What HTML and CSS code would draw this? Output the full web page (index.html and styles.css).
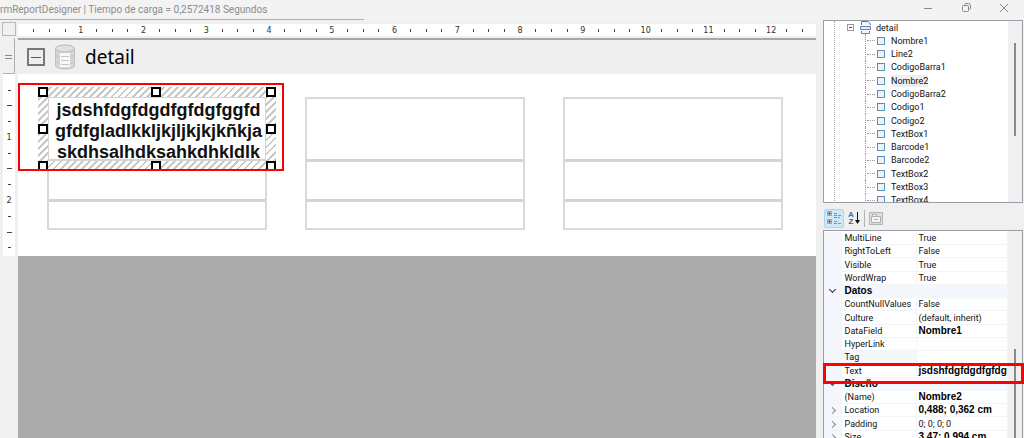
FILE: index.html
```
<!DOCTYPE html>
<html lang="es">
<head>
  <meta charset="UTF-8">
  <meta name="viewport" content="width=device-width, initial-scale=1.0">
  <title>FormReportDesigner</title>
  <link rel="stylesheet" href="styles.css">
</head>
<body>
  <div class="window">
    <header class="titlebar">
      <div class="caption">rmReportDesigner | Tiempo de carga = 0,2572418 Segundos</div>
      <div class="win-buttons">
        <button type="button" aria-label="Minimizar"><svg width="10" height="10" viewBox="0 0 10 10"><path d="M1 5.5h8"/></svg></button>
        <button type="button" aria-label="Restaurar"><svg width="10" height="10" viewBox="0 0 10 10"><path d="M1.500 3.500q0-1 1-1h4q1 0 1 1v4q0 1-1 1h-4q-1 0-1-1zM3.500 1.500q.3-1 1.500-1h2.500q2 0 2 2v2.500q0 1-1 1.500"/></svg></button>
        <button type="button" aria-label="Cerrar"><svg width="10" height="10" viewBox="0 0 10 10"><path d="M1 1l8 8M9 1l-8 8"/></svg></button>
      </div>
    </header>

    <main class="designer">
      <div class="corner"></div>
      <div class="ruler-x">
        <i></i><i></i><i></i><b>1</b>
        <i></i><i></i><i></i><b>2</b>
        <i></i><i></i><i></i><b>3</b>
        <i></i><i></i><i></i><b>4</b>
        <i></i><i></i><i></i><b>5</b>
        <i></i><i></i><i></i><b>6</b>
        <i></i><i></i><i></i><b>7</b>
        <i></i><i></i><i></i><b>8</b>
        <i></i><i></i><i></i><b>9</b>
        <i></i><i></i><i></i><b>10</b>
        <i></i><i></i><i></i><b>11</b>
        <i></i><i></i><i></i><b>12</b>
        <i></i><i></i>
      </div>

      <div class="band-grip"></div>
      <div class="band-head">
        <button type="button" class="collapse" aria-label="Contraer"></button>
        <svg class="band-icon" width="22" height="26" viewBox="0 0 22 26">
          <path class="db-side" d="M1.500 4.500v17c0 2 4 3.500 9.500 3.500s9.500-1.500 9.500-3.500v-17z"/>
          <ellipse class="db-top" cx="11" cy="4.500" rx="9.500" ry="3.500"/>
          <path class="db-page" d="M6 9h10v14H6z"/>
          <path class="db-line" d="M1.500 10c0 2 2 3 4.500 3.300M20.500 10c0 2-2 3-4.500 3.300M1.500 16c0 2 2 3 4.500 3.300M20.500 16c0 2-2 3-4.500 3.300M7 12.500h8M7 16.500h8M7 20.500h8"/>
        </svg>
        <span>detail</span>
      </div>

      <div class="ruler-y">
        <i></i><i class="half"></i><i></i><b>1</b>
        <i></i><i class="half"></i><i></i><b>2</b>
        <i></i><i class="half"></i><i></i>
      </div>
      <div class="band-body">
        <div class="label"><div></div><div></div><div></div></div>
        <div class="label"><div></div><div></div><div></div></div>
        <div class="label"><div></div><div></div><div></div></div>
        <div class="callout">
          <div class="selection">
            <div class="field">jsdshfdgfdgdfgfdgfggfd<br>gfdfgladlkkljkjljkjkjkñkja<br>skdhsalhdksahkdhkldlk</div>
            <span class="handle t l"></span><span class="handle t c"></span><span class="handle t r"></span>
            <span class="handle m l"></span><span class="handle m r"></span>
            <span class="handle b l"></span><span class="handle b c"></span><span class="handle b r"></span>
          </div>
        </div>
      </div>

      <div class="blank"></div>
    </main>

    <aside class="side">
      <div class="pane tree">
        <ul>
          <li class="parent">
            <span class="toggle"></span>
            <svg width="11" height="13" viewBox="0 0 11 13"><path fill="#eef3f8" stroke="#5c6fbe" d="M1.500 4V.5H8L10.500 3v1"/><path fill="#e3eef5" stroke="#5c7fbe" d="M.5 5.500h10v3H.5z"/><path fill="#eef3f8" stroke="#3a9db0" d="M1.500 10v2.500h8V10"/></svg>
            <span>detail</span>
          </li>
          <li>Nombre1</li>
          <li>Line2</li>
          <li>CodigoBarra1</li>
          <li><span class="current">Nombre2</span></li>
          <li>CodigoBarra2</li>
          <li>Codigo1</li>
          <li>Codigo2</li>
          <li>TextBox1</li>
          <li>Barcode1</li>
          <li>Barcode2</li>
          <li>TextBox2</li>
          <li>TextBox3</li>
          <li>TextBox4</li>
        </ul>
        <div class="scroll"></div>
      </div>

      <div class="toolbar">
        <button type="button" class="active" aria-label="Por categorías">
          <svg width="16" height="14" viewBox="0 0 16 14"><path fill="#fff" stroke="#8aa4b4" d="M1.500.5h4v4h-4zM1.500 8.500h4v4h-4z"/><path fill="#222" d="M2.500 1.500h2v2h-2zM2.500 9.500h2v2h-2z"/><path stroke="#7794a5" stroke-dasharray="3 1" d="M8 2.500h3M8 4.500h7M8 6.500h6M8 10.500h3M8 12.500h7"/></svg>
        </button>
        <button type="button" class="sort" aria-label="Alfabético">
          <span class="az"><b>A</b><b>Z</b></span>
          <svg width="5" height="12" viewBox="0 0 5 12"><path fill="none" stroke="#111" d="M2.500 0v10"/><path fill="#111" d="M0 8h5l-2.500 4z"/></svg>
        </button>
        <hr>
        <button type="button" disabled aria-label="Páginas de propiedades">
          <svg width="14" height="13" viewBox="0 0 14 13"><path fill="#ddd" stroke="#b5b5b5" d="M.5.5h13v12H.5z"/><path fill="#f4f4f4" stroke="#b0b0b0" d="M2.500 4.500h9v6h-9zM3.500 4V2.500h4V4"/><path stroke="#b0b0b0" d="M5 7.500h4"/></svg>
        </button>
      </div>

      <div class="pane props">
        <table>
          <tr><td></td><th>MultiLine</th><td>True</td></tr>
          <tr><td></td><th>RightToLeft</th><td>False</td></tr>
          <tr><td></td><th>Visible</th><td>True</td></tr>
          <tr><td></td><th>WordWrap</th><td>True</td></tr>
          <tr class="category"><td><span class="open"></span></td><th colspan="2">Datos</th></tr>
          <tr><td></td><th>CountNullValues</th><td>False</td></tr>
          <tr><td></td><th>Culture</th><td>(default, inherit)</td></tr>
          <tr><td></td><th>DataField</th><td><b>Nombre1</b></td></tr>
          <tr><td></td><th>HyperLink</th><td></td></tr>
          <tr class="picked"><td></td><th>Tag</th><td></td></tr>
          <tr><td></td><th>Text</th><td><b>jsdshfdgfdgdfgfdgfggfd</b></td></tr>
          <tr class="category"><td><span class="open"></span></td><th colspan="2">Diseño</th></tr>
          <tr><td></td><th>(Name)</th><td><b>Nombre2</b></td></tr>
          <tr><td><span class="closed"></span></td><th>Location</th><td><b>0,488; 0,362 cm</b></td></tr>
          <tr><td><span class="closed"></span></td><th>Padding</th><td>0; 0; 0; 0</td></tr>
          <tr><td><span class="closed"></span></td><th>Size</th><td><b>3,47; 0,994 cm</b></td></tr>
        </table>
        <div class="scroll"></div>
        <div class="mark"></div>
      </div>
    </aside>
  </div>
</body>
</html>
```
FILE: styles.css
```
* {
  margin: 0;
  padding: 0;
  box-sizing: border-box;
}
body {
  background: #f0f0f0;
  color: #111;
  font-family: Roboto, "Liberation Sans", sans-serif;
  font-size: 9px;
}
button {
  border: 0;
  background: none;
}
i {
  font-style: normal;
}
.window {
  display: grid;
  grid-template-columns: 1fr 208px;
  grid-template-rows: 20px 1fr;
  height: 100vh;
  overflow: hidden;
}

/* title bar */
.titlebar {
  grid-column: 1 / 3;
  display: flex;
  justify-content: space-between;
  background: #f3f3f3;
}
.caption {
  flex: 0 0 364px;
  border-bottom: 1px solid #b0b0b0;
  color: #8c8c8c;
  font-size: 10px;
  line-height: 20px;
  white-space: nowrap;
}
.win-buttons {
  display: flex;
  align-items: flex-start;
  padding: 3px 1px 0 0;
}
.win-buttons button {
  width: 38px;
  height: 10px;
}
.win-buttons svg {
  display: block;
  margin: 0 auto;
  fill: none;
  stroke: #888;
}

/* designer surface */
.designer {
  display: grid;
  grid-template-columns: 18px 1fr;
  grid-template-rows: 18px 36px 182px 1fr;
}
.corner {
  margin: 2px;
  border: 1px solid #b8b8b8;
}
.ruler-x {
  display: flex;
  align-items: center;
  margin: 4px 0 2px;
  padding: 0 6px 0 8px;
  background: #fff;
}
.ruler-x i, .ruler-x b {
  flex: 1 1 0;
  min-width: 0;
  display: flex;
  justify-content: center;
}
.ruler-x b, .ruler-y b {
  color: #333;
  font-family: "DejaVu Sans", sans-serif;
  font-size: 8px;
  font-weight: normal;
  line-height: 10px;
}
.ruler-x b {
  padding-top: 1px;
}
.ruler-x i::before {
  content: "";
  width: 1px;
  height: 3px;
  background: #444;
}
.band-grip {
  margin: 0 3px 0 3px;
  border: 1px solid #b0b0b0;
  border-width: 0 1px 1px 0;
  background: linear-gradient(#888, #888) center 17px / 7px 1px no-repeat,
              linear-gradient(#888, #888) center 20px / 7px 1px no-repeat, #f0f0f0;
}
.band-head {
  display: flex;
  align-items: center;
  border-top: 2px solid #a6a6a6;
  padding-left: 9px;
  background: #efefef;
  color: #000;
  font-family: "Noto Sans", "Open Sans", sans-serif;
  font-size: 19px;
  line-height: 34px;
}
.collapse {
  width: 18px;
  height: 18px;
  border: 2px solid #777;
  background: linear-gradient(#555, #555) center / 10px 1px no-repeat;
}
.band-icon {
  margin: 0 9px;
}
.db-side { fill: #d6d6d6; stroke: #c0c0c0; }
.db-top { fill: #e0e0e0; stroke: #b8b8b8; }
.db-page { fill: #f8f8f8; }
.db-line { fill: none; stroke: #c6c6c6; }
.ruler-y {
  display: flex;
  flex-direction: column;
  margin: 0 3px;
  padding: 9px 0 1px;
  background: #fff;
}
.ruler-y i, .ruler-y b {
  flex: 1 1 0;
  min-height: 0;
  display: flex;
  align-items: center;
  justify-content: center;
}
.ruler-y b {
  padding-top: 2px;
}
.ruler-y i::before {
  content: "";
  width: 3px;
  height: 1px;
  background: #444;
}
.ruler-y .half::before {
  width: 5px;
}
.band-body {
  position: relative;
  display: flex;
  gap: 38px;
  padding: 23px 29px;
  background: #fff;
}
.label {
  flex: 0 0 220px;
  height: 133px;
  border: 2px solid #d9d9d9;
}
.label div {
  height: 63px;
  border-bottom: 3px solid #d3d3d3;
}
.label div + div {
  height: 40px;
}
.label div:last-child {
  border: 0;
  height: 26px;
}
.blank {
  grid-column: 2;
  background: #ababab;
}

/* selected field */
.callout {
  position: absolute;
  left: 0;
  top: 9px;
  width: 266px;
  height: 88px;
  border: 2px solid #f00;
  overflow: hidden;
}
.selection {
  position: relative;
  width: 238px;
  margin: 2px 0 0 18px;
  padding: 10px;
  background: repeating-linear-gradient(135deg, #fff 0 3px, #c8c8c8 3px 5px);
}
.field {
  height: 64px;
  padding: 2px 0 0 3px;
  border: 1px solid #d3d3d3;
  border-width: 1px 1px 2px;
  background: #fff;
  color: #111;
  font-family: "Liberation Sans", Arial, sans-serif;
  font-size: 18px;
  font-weight: bold;
  line-height: 21px;
  text-align: center;
  white-space: nowrap;
}
.handle {
  position: absolute;
  width: 10px;
  height: 10px;
  border: 2px solid #000;
  background: #fff;
}
.t { top: 0; }
.m { top: 37px; }
.b { bottom: 0; }
.l { left: 0; }
.c { left: 113px; }
.r { right: 0; }

/* side panes */
.side {
  display: flex;
  flex-direction: column;
  min-height: 0;
  padding: 0 1px 0 7px;
}
.pane {
  position: relative;
  display: flex;
  border: 1px solid #9a9ea6;
  background: #fff;
}
.scroll {
  flex: 0 0 14px;
  background: #f0f0f0;
}
.scroll::before {
  content: "";
  display: block;
  width: 2px;
  height: 93px;
  margin: 22px 0 0 6px;
  background: #8a8a8a;
}
.tree {
  height: 183px;
  overflow: hidden;
}
.tree ul {
  flex: 1;
  display: grid;
  grid-auto-rows: 1fr;
  height: 186px;
  margin-left: 10px;
  border-left: 1px dotted #aaa;
  line-height: 12px;
  list-style: none;
  white-space: nowrap;
}
.tree li {
  display: flex;
  align-items: center;
  margin-left: 30px;
  border-left: 1px dotted #999;
}
.tree li::before {
  content: "";
  width: 8px;
  margin: 0 16px 0 1px;
  border-top: 1px dotted #999;
}
.tree li:not(.parent) {
  background: linear-gradient(#eef2f5, #eef2f5) 12px center / 6px 6px no-repeat,
              linear-gradient(135deg, #7176c4, #48a6bd) 11px center / 8px 8px no-repeat;
}
.tree .parent {
  margin-left: 12px;
  border: 0;
}
.tree .parent::before {
  display: none;
}
.parent svg {
  margin: 0 5px 0 6px;
}
.toggle {
  width: 7px;
  height: 7px;
  border: 1px solid #999;
  background: linear-gradient(#345, #345) center / 3px 1px no-repeat;
}
.current {
  background: #efefef;
}
.toolbar {
  display: flex;
  align-items: center;
  gap: 2px;
  height: 27px;
  padding: 3px 1px 0;
}
.toolbar button {
  display: flex;
  align-items: center;
  justify-content: center;
  width: 20px;
  height: 19px;
}
.toolbar .active {
  border: 1px solid #a6d8f5;
  border-radius: 2px;
  background: #cce8f9;
}
.toolbar .sort {
  gap: 1px;
  width: 16px;
}
.toolbar hr {
  width: 1px;
  height: 17px;
  margin-right: 2px;
  border: 0;
  background: #b5b5b5;
}
.toolbar button:last-child {
  width: 14px;
}
.az {
  display: flex;
  flex-direction: column;
  color: #3c6fc0;
  font-family: "Liberation Sans", Arial, sans-serif;
  font-size: 8px;
  line-height: 7px;
}
.az b + b {
  color: #8a4560;
}

/* property grid */
.props {
  flex: 1;
  min-height: 0;
  border-bottom: 0;
}
table {
  width: 184px;
  height: 212px;
  margin-top: 1px;
  border-collapse: collapse;
  table-layout: fixed;
}
th, td {
  border: 1px solid #f1f4f9;
  border-width: 0 1px 1px 0;
  font-weight: normal;
  line-height: 12px;
  text-align: left;
  white-space: nowrap;
  overflow: hidden;
}
td:first-child {
  width: 17px;
  background: #f4f7fc;
  line-height: 8px;
  text-align: center;
}
th {
  width: 75px;
  padding-left: 3px;
}
th + td {
  padding-left: 2px;
}
.category th {
  background: #f4f7fc;
}
.picked th {
  background: #f4f7fc;
}
td b, .category th {
  color: #000;
  font-family: "Liberation Sans", Arial, sans-serif;
  font-size: 10px;
  font-weight: bold;
}
.open, .closed {
  display: inline-block;
  width: 5px;
  height: 5px;
  border: 1px solid #333;
  border-width: 0 1px 1px 0;
  transform: translateY(-2px) rotate(45deg);
}
.closed {
  border-color: #888;
  transform: rotate(-45deg);
}
.props .scroll::before {
  margin-top: 118px;
}
.mark {
  position: absolute;
  left: -1px;
  right: -2px;
  top: 132px;
  height: 21px;
  border: 3px solid #f00;
}
```
